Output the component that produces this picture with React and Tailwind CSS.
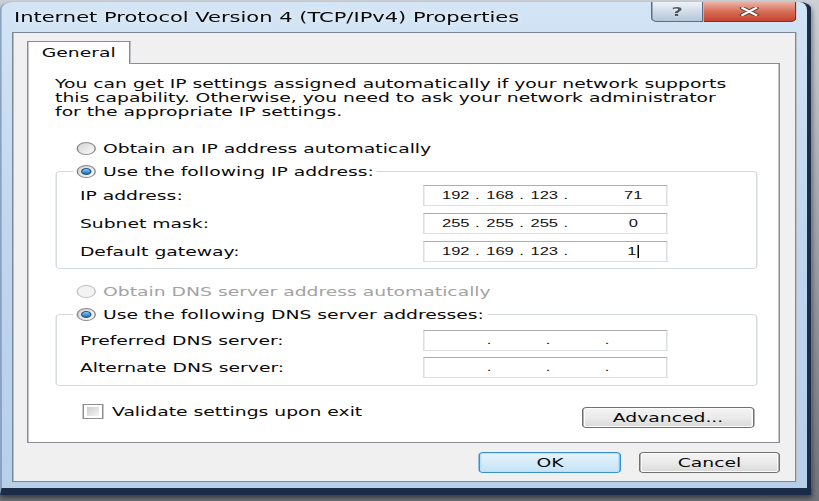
import React from 'react';

// The reference is a Win7 dialog stretched sideways, so the dialog is laid out
// at its natural width (546px) and stretched 1.5x on the root.

function Radio({ checked, disabled }) {
  return (
    <span
      className={`flex h-[13px] w-[13px] shrink-0 items-center justify-center rounded-full border ${
        disabled
          ? 'border-[#c4c4c4] bg-[#f3f3f3]'
          : 'border-[#8a8a8a] bg-linear-to-br from-[#d4d4d4] to-[#fbfbfb]'
      }`}
    >
      {checked && (
        <span className="h-[7px] w-[7px] rounded-full border border-[#1d5a95] bg-linear-to-b from-[#8fd0f5] to-[#1d68ad]" />
      )}
    </span>
  );
}

function RadioRow({ label, checked, disabled, className = '' }) {
  return (
    <div className={`flex h-[18px] w-fit items-center gap-[5px] ${className}`}>
      <Radio checked={checked} disabled={disabled} />
      <span className={`whitespace-nowrap ${disabled ? 'text-[#a3a3a3]' : ''}`}>{label}</span>
    </div>
  );
}

function IpField({ value, caret }) {
  return (
    <div className="flex h-[21px] w-[163.3px] shrink-0 items-center overflow-hidden border border-[#dadde2] border-t-[#abadb3] bg-white font-['Liberation_Sans_Narrow','Liberation_Sans',sans-serif] text-[11px] leading-none text-[#111]">
      {value ? (
        <div className="flex items-center pl-[11.7px]">
          {value.slice(0, 3).map((n, i) => (
            <React.Fragment key={i}>
              <span className="w-[14px] shrink-0 text-center">{n}</span>
              <span className="w-[15.5px] shrink-0 pl-[8px]">.</span>
            </React.Fragment>
          ))}
          <span className="ml-[9px] flex w-[60px] shrink-0 items-center justify-center">
            {value[3]}
            {caret && <span className="ml-[1px] h-[13px] w-px bg-black" />}
          </span>
        </div>
      ) : (
        <div className="flex items-center pl-[41.6px]">
          {[0, 1, 2].map((i) => (
            <span key={i} className="w-[39.3px] shrink-0">.</span>
          ))}
        </div>
      )}
    </div>
  );
}

function Row({ label, children, className = '' }) {
  return (
    <div className={`flex h-[21px] items-center ${className}`}>
      <span className="w-[244.3px] shrink-0 whitespace-nowrap pl-[15.6px]">{label}</span>
      {children}
    </div>
  );
}

function Group({ title, children, className = '' }) {
  return (
    <div className={`w-[468px] rounded-[3px] border border-[#d5dadf] ${className}`}>
      <RadioRow label={title} checked className="-mt-[10px] ml-[11px] bg-white px-[2px]" />
      {children}
    </div>
  );
}

function Button({ children, primary, className = '' }) {
  return (
    <div
      className={`flex h-[21px] items-center justify-center rounded-[3px] border ${
        primary
          ? 'border-[#3c8fcf] bg-linear-to-b from-[#e6f4fc] to-[#c4e3f5] shadow-[inset_0_0_0_1px_#b8e2fa]'
          : 'border-[#707070] bg-linear-to-b from-[#f4f4f4] via-[#ebebeb] to-[#d9d9d9] shadow-[inset_0_0_0_1px_#fcfcfc]'
      } ${className}`}
    >
      {children}
    </div>
  );
}

export default function App() {
  return (
    <div className="h-[501px] w-[819px] overflow-hidden bg-linear-to-b from-[#cdd1d6] to-[#70747a]">
      <div className="w-[546px] origin-top-left scale-x-[1.5] font-['DejaVu_Sans',sans-serif] text-[12.5px] leading-[15px] text-[#0a0a0a]">
        <div className="mt-[2px] flex h-[493px] w-[541.3px] flex-col rounded-t-[8px] border-b-[7px] border-l border-r-[3px] border-l-[#8aa2bd] border-r-[#1c2b47] border-b-[#1c2b47] bg-linear-to-b from-[#d3e4f5] via-[#bed6ee] to-[#b7d0ea] shadow-[0_3px_4px_rgba(0,0,0,0.5)]">
          {/* Title bar */}
          <div className="flex h-[30px] shrink-0 items-start justify-between pl-[8.3px] pr-[7.3px]">
            <span className="whitespace-nowrap pt-[6px] text-[14px] leading-[18px] [text-shadow:0_0_8px_#fff]">
              Internet Protocol Version 4 (TCP/IPv4) Properties
            </span>
            <div className="flex h-[20px]">
              <div className="flex w-[35px] items-center justify-center rounded-bl-[4px] border border-t-0 border-[#5d6f86] bg-linear-to-b from-[#eef3f8] to-[#b4c5d8]">
                <span className="text-[13px] font-bold leading-none text-[#4f5660] [text-shadow:0_0_2px_#fff]">?</span>
              </div>
              <div className="flex w-[62px] items-center justify-center rounded-br-[4px] border border-l-0 border-t-0 border-[#6b3a30] bg-linear-to-b from-[#eab3a5] via-[#d76d58] to-[#c4432e]">
                <svg width="13" height="9" viewBox="0 0 13 9">
                  <path d="M2 1 L11 8 M11 1 L2 8" stroke="#6b3a33" strokeWidth="3.6" strokeLinecap="round" />
                  <path d="M2 1 L11 8 M11 1 L2 8" stroke="#fff" strokeWidth="2" strokeLinecap="round" />
                </svg>
              </div>
            </div>
          </div>

          {/* Client area */}
          <div className="ml-[7px] flex h-[450px] w-[523px] shrink-0 flex-col border border-[#7c8896] bg-[#f0f0f0]">
            <div className="relative z-10 ml-[9px] mt-[8px] flex h-[23px] w-[69px] items-center justify-center border border-b-0 border-[#898c95] bg-white pb-[1px]">
              General
            </div>
            <div className="-mt-px ml-[9px] flex h-[380px] w-[502px] flex-col border border-[#898c95] bg-white pl-[17.7px] pt-[13px]">
              <p className="whitespace-nowrap leading-[14px]">
                You can get IP settings assigned automatically if your network supports
                <br />
                this capability. Otherwise, you need to ask your network administrator
                <br />
                for the appropriate IP settings.
              </p>

              <RadioRow label="Obtain an IP address automatically" className="ml-[14px] mt-[20px]" />

              <Group title="Use the following IP address:" className="mt-[14px] pb-[6px]">
                <Row label="IP address:" className="mt-[5px]">
                  <IpField value={['192', '168', '123', '71']} />
                </Row>
                <Row label="Subnet mask:" className="mt-[7px]">
                  <IpField value={['255', '255', '255', '0']} />
                </Row>
                <Row label="Default gateway:" className="mt-[7px]">
                  <IpField value={['192', '169', '123', '1']} caret />
                </Row>
              </Group>

              <RadioRow label="Obtain DNS server address automatically" disabled className="ml-[14px] mt-[13px]" />

              <Group title="Use the following DNS server addresses:" className="mt-[14px] pb-[7px]">
                <Row label="Preferred DNS server:" className="mt-[7px]">
                  <IpField />
                </Row>
                <Row label="Alternate DNS server:" className="mt-[6px]">
                  <IpField />
                </Row>
              </Group>

              <div className="mt-[18px] flex items-start">
                <div className="ml-[18px] flex h-[15px] items-center gap-[5.3px]">
                  <span className="h-[15px] w-[14.7px] shrink-0 border border-[#8f8f8f] bg-white p-[2px]">
                    <span className="block h-full w-full bg-linear-to-br from-[#cbcbcb] to-[#f6f6f6]" />
                  </span>
                  <span className="whitespace-nowrap">Validate settings upon exit</span>
                </div>
                <Button className="ml-auto mr-[16.3px] mt-[3px] w-[114.7px]">Advanced...</Button>
              </div>
            </div>

            <div className="mr-[10px] mt-[9px] flex justify-end gap-[12px]">
              <Button primary className="w-[94.7px]">OK</Button>
              <Button className="w-[94px]">Cancel</Button>
            </div>
          </div>
        </div>
      </div>
    </div>
  );
}
